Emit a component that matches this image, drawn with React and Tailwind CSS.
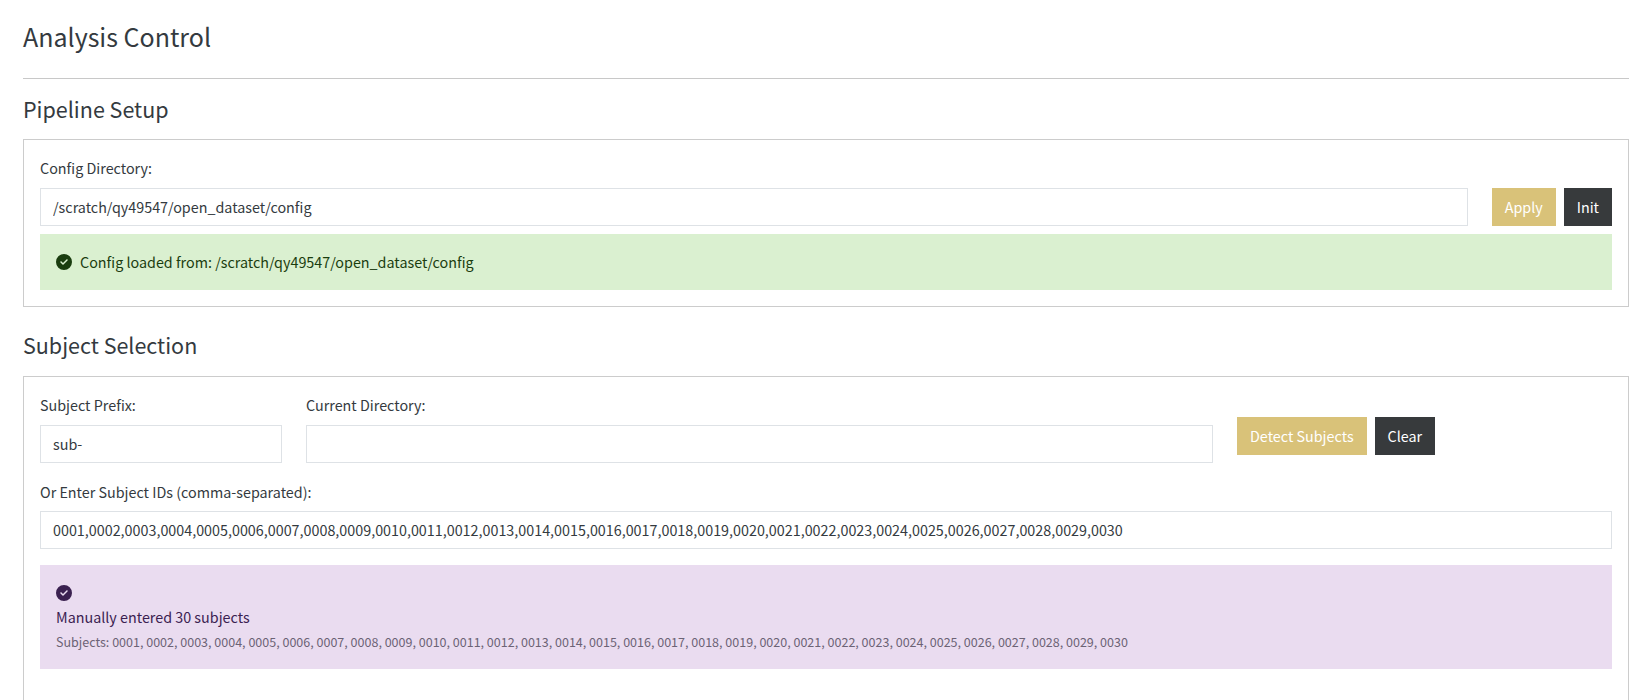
import React from 'react';

const CheckDot = ({ fill }) => (
  <svg viewBox="0 0 512 512" className="w-4 h-4 shrink-0" fill={fill}>
    <path d="M256 512A256 256 0 1 0 256 0a256 256 0 1 0 0 512zM369 209L241 337c-9.4 9.4-24.6 9.4-33.9 0l-64-64c-9.4-9.4-9.4-24.6 0-33.9s24.6-9.4 33.9 0l47 47L335 175c9.4-9.4 24.6-9.4 33.9 0s9.4 24.6 0 33.9z" />
  </svg>
);

const TextBox = ({ value, className = '' }) => (
  <input
    readOnly
    value={value}
    className={`h-[38px] border border-[#dee2e6] bg-white px-3 pb-[2px] text-[14.33px] text-[#343a40] outline-none ${className}`}
  />
);

const App = () => {
  return (
    <div className="h-[700px] overflow-hidden bg-white font-['Noto_Sans_CJK_JP','Noto_Sans',sans-serif] text-[14.33px] text-[#343a40] pl-[23px] pr-[19px]">
      <h2 className="pt-[17px] text-[25px] leading-[38px]">Analysis Control</h2>
      <hr className="mt-[23px] border-[#c8c8c8]" />
      <h3 className="mt-[15px] text-[21.5px] leading-[30px]">Pipeline Setup</h3>

      <div className="mt-[15px] border border-[#ccc] p-4">
        <label className="block leading-6 mb-[8px]">Config Directory:</label>
        <div className="flex">
          <TextBox value="/scratch/qy49547/open_dataset/config" className="flex-1 min-w-0" />
          <button className="ml-[24px] h-[38px] px-[13px] bg-[#d9c279] text-white">Apply</button>
          <button className="ml-2 h-[38px] px-[13px] bg-[#373a3c] text-white">Init</button>
        </div>
        <div className="mt-2 h-[56px] bg-[#daf0d0] flex items-center gap-2 px-4 text-[#1a3d0f]">
          <CheckDot fill="#1a3d0f" />
          <span>Config loaded from: /scratch/qy49547/open_dataset/config</span>
        </div>
      </div>

      <h3 className="mt-[23px] text-[21.5px] leading-[30px]">Subject Selection</h3>

      <div className="mt-[16px] border border-[#ccc] px-4 pt-[16px] h-[400px]">
        <div className="flex">
          <div className="w-[242px]">
            <label className="block leading-6 mb-[8px]">Subject Prefix:</label>
            <TextBox value="sub-" className="w-full" />
          </div>
          <div className="ml-[24px] w-[907px]">
            <label className="block leading-6 mb-[8px]">Current Directory:</label>
            <TextBox value="" className="w-full" />
          </div>
          <div className="ml-[24px] flex gap-2 pt-[24px] items-start">
            <button className="h-[38px] px-[13px] bg-[#d9c279] text-white">Detect Subjects</button>
            <button className="h-[38px] px-[13px] bg-[#373a3c] text-white">Clear</button>
          </div>
        </div>
        <label className="block leading-6 mt-[17px] mb-[7px]">Or Enter Subject IDs (comma-separated):</label>
        <TextBox value="0001,0002,0003,0004,0005,0006,0007,0008,0009,0010,0011,0012,0013,0014,0015,0016,0017,0018,0019,0020,0021,0022,0023,0024,0025,0026,0027,0028,0029,0030" className="w-full" />
        <div className="mt-4 h-[104px] bg-[#eadcf0] px-4 pt-[20px] text-[#3b2150]">
          <CheckDot fill="#3b2150" />
          <div className="mt-[4px] leading-6">Manually entered 30 subjects</div>
          <div className="mt-[3px] text-[12.52px] leading-5 text-[#6c6375]">
            Subjects: 0001, 0002, 0003, 0004, 0005, 0006, 0007, 0008, 0009, 0010, 0011, 0012, 0013, 0014, 0015, 0016, 0017, 0018, 0019, 0020, 0021, 0022, 0023, 0024, 0025, 0026, 0027, 0028, 0029, 0030
          </div>
        </div>
      </div>
    </div>
  );
};

export default App;
